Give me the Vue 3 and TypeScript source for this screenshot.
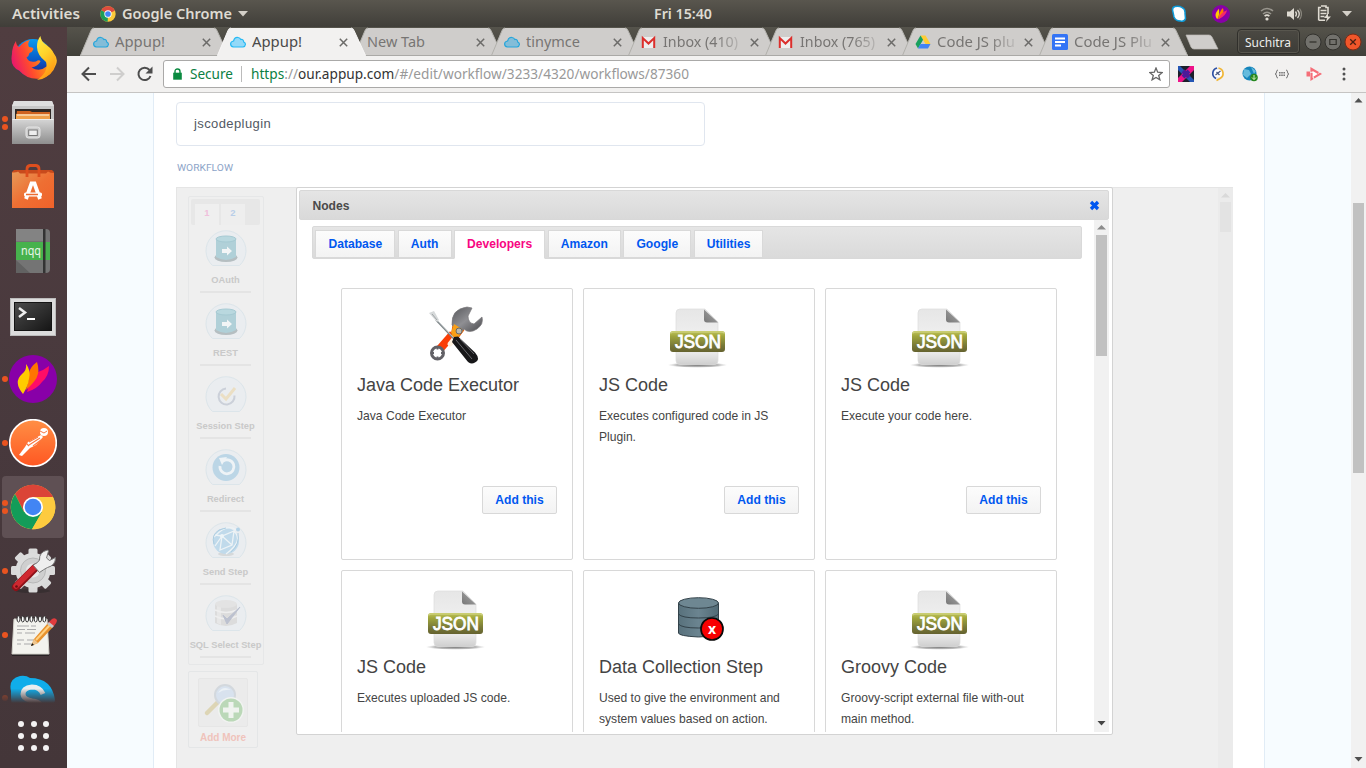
<script setup lang="ts">
import { h } from 'vue'
import type { FunctionalComponent } from 'vue'

interface LabelProps {
  text: string
  w: number
  size?: number
  color?: string
  weight?: number
  family?: string
}

// One line of text set to an exact advance width.
const Label: FunctionalComponent<LabelProps> = (p) =>
  h('svg', { width: p.w, height: 20, style: 'display:block;flex:none;overflow:visible' }, [
    h(
      'text',
      {
        x: 0,
        y: 15,
        textLength: p.w,
        lengthAdjust: 'spacingAndGlyphs',
        'font-size': p.size ?? 14,
        'font-weight': p.weight ?? 400,
        'font-family': p.family ?? '"Noto Sans", "Open Sans", sans-serif',
        fill: p.color ?? '#333',
      },
      p.text,
    ),
  ])
Label.props = ['text', 'w', 'size', 'color', 'weight', 'family']

interface Tab {
  title: string
  w: number
  icon: string
  active?: boolean
  fade?: boolean
}
const tabs: Tab[] = [
  { title: 'Appup!', w: 50, icon: 'cloud' },
  { title: 'Appup!', w: 50, icon: 'cloud', active: true },
  { title: 'New Tab', w: 58, icon: '' },
  { title: 'tinymce', w: 54, icon: 'cloud' },
  { title: 'Inbox (410)', w: 75, icon: 'mail', fade: true },
  { title: 'Inbox (765)', w: 75, icon: 'mail', fade: true },
  { title: 'Code JS plu', w: 78, icon: 'drive', fade: true },
  { title: 'Code JS Plu', w: 78, icon: 'docs', fade: true },
]

const dock = [
  { id: 'firefox', dots: 0 },
  { id: 'files', dots: 2 },
  { id: 'software', dots: 0 },
  { id: 'nqq', dots: 0 },
  { id: 'terminal', dots: 0 },
  { id: 'flame', dots: 1 },
  { id: 'postman', dots: 1 },
  { id: 'chrome', dots: 2 },
  { id: 'settings', dots: 1 },
  { id: 'notes', dots: 1 },
  { id: 'skype', dots: 1 },
]

const steps = [
  { name: 'OAuth', icon: 'bucket' },
  { name: 'REST', icon: 'bucket' },
  { name: 'Session Step', icon: 'check' },
  { name: 'Redirect', icon: 'redo' },
  { name: 'Send Step', icon: 'globe' },
  { name: 'SQL Select Step', icon: 'sql' },
]

const categories = ['Database', 'Auth', 'Developers', 'Amazon', 'Google', 'Utilities']

const cards = [
  { title: 'Java Code Executor', text: 'Java Code Executor', icon: 'tools' },
  { title: 'JS Code', text: 'Executes configured code in JS Plugin.', icon: 'json' },
  { title: 'JS Code', text: 'Execute your code here.', icon: 'json' },
  { title: 'JS Code', text: 'Executes uploaded JS code.', icon: 'json' },
  { title: 'Data Collection Step', text: 'Used to give the environment and system values based on action.', icon: 'data' },
  { title: 'Groovy Code', text: 'Groovy-script external file with-out main method.', icon: 'json' },
]

const gearTeeth = [0, 45, 90, 135, 180, 225, 270, 315]
const rings = [0, 1, 2, 3, 4, 5, 6]
const gridDots = [0, 1, 2, 3, 4, 5, 6, 7, 8]
</script>

<template>
  <div class="desktop">
    <svg class="defs" width="0" height="0">
      <defs>
        <linearGradient id="ffBody" x1="0" y1="0.6" x2="1" y2="0.3">
          <stop offset="0" stop-color="#e8156f" /><stop offset=".35" stop-color="#ff4a2e" /><stop offset=".7" stop-color="#ff9416" /><stop offset="1" stop-color="#ffc52a" />
        </linearGradient>
        <linearGradient id="ffTail" x1="0" y1="0" x2="0.4" y2="1">
          <stop offset="0" stop-color="#fff04a" /><stop offset=".5" stop-color="#ffd22a" /><stop offset="1" stop-color="#ff9a14" />
        </linearGradient>
        <linearGradient id="ffGlobe" x1="0" y1="0" x2="0" y2="1">
          <stop offset="0" stop-color="#0a9bf0" /><stop offset=".6" stop-color="#0a54c4" /><stop offset="1" stop-color="#2b1b78" />
        </linearGradient>
        <linearGradient id="metal" x1="0" y1="0" x2="0" y2="1">
          <stop offset="0" stop-color="#d6d6d6" /><stop offset="1" stop-color="#8e8e8e" />
        </linearGradient>
        <linearGradient id="bag" x1="0" y1="0" x2="1" y2="1">
          <stop offset="0" stop-color="#e89a58" /><stop offset=".5" stop-color="#ee6f33" /><stop offset="1" stop-color="#f0622a" />
        </linearGradient>
        <linearGradient id="screen" x1="0" y1="0" x2="1" y2="1">
          <stop offset="0" stop-color="#4b4b4b" /><stop offset="1" stop-color="#161616" />
        </linearGradient>
        <linearGradient id="pm" x1="0" y1="0" x2="0" y2="1">
          <stop offset="0" stop-color="#ff8f45" /><stop offset="1" stop-color="#ff5722" />
        </linearGradient>
        <linearGradient id="paper" x1="0" y1="0" x2="0" y2="1">
          <stop offset="0" stop-color="#e6e6e6" /><stop offset=".5" stop-color="#efefef" /><stop offset=".8" stop-color="#e8e8e8" /><stop offset="1" stop-color="#cfcfcf" />
        </linearGradient>
        <linearGradient id="olive" x1="0" y1="0" x2="0" y2="1">
          <stop offset="0" stop-color="#c0c45a" /><stop offset=".25" stop-color="#9fa53c" /><stop offset=".7" stop-color="#777838" /><stop offset="1" stop-color="#65622f" />
        </linearGradient>
        <linearGradient id="fold" x1="0" y1="1" x2="1" y2="0">
          <stop offset="0" stop-color="#777" /><stop offset="1" stop-color="#aaa" />
        </linearGradient>
        <radialGradient id="shade"><stop offset="0" stop-color="#777" /><stop offset=".7" stop-color="#aaa" stop-opacity=".8" /><stop offset="1" stop-color="#ccc" stop-opacity="0" /></radialGradient>
        <linearGradient id="steel" x1="0" y1="0" x2="1" y2="1">
          <stop offset="0" stop-color="#55565a" /><stop offset=".5" stop-color="#8f8f93" /><stop offset="1" stop-color="#4a4a4e" />
        </linearGradient>
        <linearGradient id="cyl" x1="0" y1="0" x2="1" y2="0">
          <stop offset="0" stop-color="#58717c" /><stop offset=".5" stop-color="#6b8490" /><stop offset="1" stop-color="#516a75" />
        </linearGradient>
      </defs>
    </svg>

    <header class="topbar">
      <Label class="activities" text="Activities" :w="68" :size="14" :weight="600" color="#dfdbd2" />
      <svg class="mini-chrome" width="16" height="16" viewBox="0 0 48 48">
        <circle cx="24" cy="24" r="23" fill="#fbc93a" />
        <path d="M24 24 4 12.500A23 23 0 0 1 44 12.500L44 14z" fill="#dd4b3e" />
        <path d="M24 24 4 12.500A23 23 0 0 0 23 47z" fill="#1d9d58" />
        <circle cx="24" cy="24" r="11" fill="#fff" /><circle cx="24" cy="24" r="8.500" fill="#4285f4" />
      </svg>
      <Label text="Google Chrome" :w="110" :size="14" :weight="600" color="#dfdbd2" />
      <svg class="caret" width="10" height="6" viewBox="0 0 10 6"><path d="M0 0h10L5 5.500z" fill="#d4d0c8" /></svg>
      <Label class="clock" text="Fri 15:40" :w="58" :size="14" :weight="600" color="#dfdbd2" />
      <div class="tray">
        <svg width="16" height="18" viewBox="0 0 16 18"><path d="M4 1.500Q8 .5 11 2.500q3.500 1.500 3 6l.5 5q-1 3.500-5 2.500-5 0-6.500-4L1.500 5q0-3 2.500-3.500" fill="#fff" stroke="#0e9ad8" stroke-width="1.500" /></svg>
        <svg width="18" height="18" viewBox="0 0 48 48"><circle cx="24" cy="24" r="24" fill="#8800a8" /><path d="M14 38C4 25 13 18 18 10q4 14-4 28" fill="#fc0" /><path d="M16 38q4-22 13-30 5 11-4 22z" fill="#ff7a00" /><path d="M18 38Q21 20 40 14q-3 15-22 24" fill="#f8286a" /></svg>
        <svg width="14" height="14" viewBox="0 0 14 14" fill="none" stroke-width="1.600"><path d="M1 4q6-5 12 0M3 7q4-3.500 8 0" stroke="#99968e" /><path d="M4.600 9.200q2.400-2 4.800 0" stroke="#dfdbd2" /><circle cx="7" cy="12" r="1.600" fill="#dfdbd2" /></svg>
        <svg width="15" height="14" viewBox="0 0 15 14"><path d="M0 4.500h3L7 1v12L3 9.500H0z" fill="#dfdbd2" /><path d="M8.500 4.500q2 2.500 0 5M10.500 3q3.500 4 0 8" fill="none" stroke="#dfdbd2" stroke-width="1.300" /><path d="M12.500 1.500q4 5.500 0 11" fill="none" stroke="#88857c" stroke-width="1.200" /></svg>
        <svg width="15" height="17" viewBox="0 0 15 17"><path d="M4 1h5v1.500h2V9M1.700 15.500V2.500H4M2 15.300h6" fill="none" stroke="#dfdbd2" stroke-width="1.600" /><path d="M3.500 5.500h6M3.500 8.500h6M3.500 11.500h4" stroke="#dfdbd2" stroke-width="1.400" /><path d="m11 8-4 5h3l-1 4 5-5.500h-3z" fill="#dfdbd2" /></svg>
        <svg width="10" height="6" viewBox="0 0 10 6"><path d="M0 0h10L5 5.500z" fill="#d4d0c8" /></svg>
      </div>
    </header>

    <aside class="dock">
      <div v-for="d in dock" :key="d.id" class="dock-item" :class="d.id">
        <div class="dots"><i v-for="n in d.dots" :key="n" /></div>
        <svg class="dock-icon" width="48" height="48" viewBox="0 0 48 48">
          <g v-if="d.id === 'firefox'">
            <circle cx="24" cy="23" r="19" fill="url(#ffGlobe)" />
            <path d="M7 6q0 4 3 6 5-6 11-7-3 3-1 7 4 0 4.500 2-1 3-4 4-.5 3-3 4.500 2 4 5 4 4 1 6-1 2-1 3 1-3 5-9 6 8 5 15-1 6-6 2-16 11 5 7.500 14-4 12-15 14-13 2-22-8Q.5 31 3 19q0-7 4-13" fill="url(#ffBody)" />
            <path d="M31.500 1q0 5 6 9 7 5 8.500 12 1 14-9 20-4 3-9 3 12-8 9-18-9-7-9-15 0-7 3.500-11" fill="url(#ffTail)" />
          </g>
          <g v-else-if="d.id === 'files'">
            <path d="m5 2h38l2 5v36H3V7z" fill="#c7c7c7" /><path d="M5 2h38l2 5H3z" fill="#dedede" />
            <path d="M6 10h36v10H6z" fill="#2f2825" /><path d="M8 12h13l2 1h18v7H7z" fill="#cf6220" /><path d="M7 15h34v5H7z" fill="#f0a04b" /><path d="M8 16h32" stroke="#fff5e8" />
            <path d="M3 20h42v25H3z" fill="url(#metal)" /><path d="M3.500 20.500h41" stroke="#ededed" />
            <rect x="17" y="28" width="14" height="11" rx="2.500" fill="#ccc" stroke="#e6e6e6" /><rect x="19.700" y="31" width="8.600" height="5.500" fill="#eee" stroke="#777" />
          </g>
          <g v-else-if="d.id === 'software'">
            <path d="M3 9 5 7h38l2 2v6H3z" fill="#c84a1c" /><path d="M3 9.500q5 0 6-1l2 2h26l2-2q2 1.500 6 1.500v35H3z" fill="url(#bag)" />
            <path d="M18 14V6q0-3 3-3.500h6q3 .5 3 3.500v8" fill="none" stroke="#dd4e1e" stroke-width="2.800" />
            <path d="m17 36 5.500-15.500h3L31 36" fill="none" stroke="#fff" stroke-width="3.800" /><rect x="15" y="29.500" width="18" height="4" rx="1.500" fill="#fff" /><path d="M17 31.500h12" stroke="#ec6b31" stroke-width="1.500" />
          </g>
          <g v-else-if="d.id === 'nqq'">
            <path d="M7 2h30q4 0 4 4v36q0 4-4 4H7z" fill="#747474" /><path d="M7 2h27v12H7z" fill="#838383" /><path d="m7 33 14 13H7z" fill="#626262" /><path d="M7 15h34v18H7z" fill="#47b24d" /><path d="M34 2h2.500v44H34z" fill="#333" />
            <text x="12" y="27.500" font-size="12" textLength="20" lengthAdjust="spacingAndGlyphs" fill="#e9f5e9" font-family="Noto Sans">nqq</text>
          </g>
          <g v-else-if="d.id === 'terminal'">
            <path d="M1 7h46v38H1z" fill="#bcbcbc" /><path d="M2 8h44v36H2z" fill="#dcdcdc" /><path d="M5 11h38v29H5z" fill="#141414" /><path d="M6 12h36v27H6z" fill="url(#screen)" />
            <path d="m10 17 6 4.500-6 4.500" fill="none" stroke="#eee" stroke-width="2.500" /><path d="M18 28h8" stroke="#fff" stroke-width="2" />
          </g>
          <g v-else-if="d.id === 'flame'">
            <circle cx="24" cy="24" r="24" fill="#8800a8" />
            <path d="M18 37q10-3 15-10 7-6 7-16-5 4-11 6-7 3-11 20" fill="#ff0d66" /><path d="M17 35Q20 26 20 18q1-6 8-11 3 9-.5 16-3 5-10.500 12" fill="#ff7400" /><path d="M14 39q-10-12-1-20 5-4 4-10 5 6 3 15-1 7-6 15" fill="#fc0" />
          </g>
          <g v-else-if="d.id === 'postman'">
            <circle cx="24" cy="24" r="23.300" fill="url(#pm)" stroke="#fff" stroke-width="1.700" />
            <circle cx="35" cy="13" r="4" fill="#fff" /><path d="m32 16-13 7-3 5-6 8 3 1 8-8 6-3 7-8z" fill="#fff" /><path d="m31 19-11 7m9-8-9 5m12-2-8 6m-7-3 3 3" stroke="#f97842" stroke-width="1.100" /><path d="m31 12 4 2 3-2" fill="none" stroke="#f97842" />
          </g>
          <g v-else-if="d.id === 'chrome'">
            <circle cx="24" cy="24" r="22.300" fill="#fdcb3f" />
            <path d="M24 14h20A22.300 22.300 0 0 0 6 11l9 18z" fill="#db4437" />
            <path d="M6 11a22.300 22.300 0 0 0 17 35.300L33 29 15 29z" fill="#139c59" />
            <path d="M24 14h20a22.300 22.300 0 0 1-21 32.300L33 29z" fill="#fdcb3f" />
            <circle cx="24" cy="24" r="10" fill="#fff" /><circle cx="24" cy="24" r="8.300" fill="#4285f4" />
          </g>
          <g v-else-if="d.id === 'settings'">
            <ellipse cx="24" cy="44" rx="17" ry="2" fill="#222" opacity=".4" />
            <rect v-for="a in gearTeeth" :key="a" x="19.500" y="1.500" width="9" height="12" rx="1.500" fill="#dadada" :transform="`rotate(${a} 24 23.500)`" />
            <circle cx="24" cy="23.500" r="17.500" fill="#dcdcdc" /><circle cx="24" cy="23.500" r="12.500" fill="#cfcfcf" stroke="#b8b8b8" /><circle cx="24" cy="23.500" r="7" fill="#e8e8e8" />
            <path d="m7 40 19-19" stroke="#8e1118" stroke-width="8" stroke-linecap="round" /><path d="m7 39 19-19" stroke="#cf2830" stroke-width="5.500" stroke-linecap="round" />
            <path d="M24 18q5-2 6.500-5-.5-8 8-10l1 1-2 7 3 2.500 6-3q0 8-8 10-4 2-8 5z" fill="#eee" stroke="#777" /><circle cx="7.500" cy="39.500" r="1.300" fill="#691010" />
          </g>
          <g v-else-if="d.id === 'notes'">
            <path d="M3 43h37v2H3z" fill="#282224" /><path d="M5 8h33l2 35H3z" fill="#f3f3ee" stroke="#d4d4cc" />
            <g v-for="n in rings" :key="n"><ellipse :cx="9.500 + n * 4.300" cy="8" rx="1.500" ry="3" fill="#fff" stroke="#333" stroke-width="1" /></g>
            <path d="M8 15h12m2 0h5M8 18.500h8m2 0h9M8 22h5m3 0h10M8 29h7m3 0h8M8 33h4m3 0h7" stroke="#aaa" stroke-width="1.200" />
            <path d="m25 28 14-16 5 4-15 16-7 3z" fill="#e8922d" /><path d="m27 29 14-15" stroke="#ffd081" stroke-width="2" /><path d="m39 12 4-4q3-2 5 1 0 3-4 7z" fill="#e03b3d" /><path d="m38 13 5 4 2-2-5-4z" fill="#c7c7c7" /><path d="m25 28 4 4-7 3z" fill="#edc58e" /><path d="m23 32 2 2-3 1z" fill="#111" />
          </g>
          <g v-else>
            <path d="M2 16q-3-12 9-15 6-1 10 2 22 0 25 22l-5 21-24 2Q1 42 2 16" fill="#10adea" />
            <path d="M34 19q-3-7-11-7-9 1-9 7 0 5 9 7 9 1 9 7 0 5-8 5-7 0-10-7" fill="none" stroke="#e9eef0" stroke-width="5" />
          </g>
        </svg>
      </div>
      <div class="apps"><i v-for="n in gridDots" :key="n" /></div>
    </aside>

    <main class="browser">
      <div class="tabstrip">
        <div v-for="(t, i) in tabs" :key="i" class="tab" :class="{ active: t.active }">
          <svg class="shape" width="150" height="29" viewBox="0 0 150 29">
            <path d="M0 29 11 3.500Q12 1 14 1H134Q136 1 137 3.500L149 29z" :fill="t.active ? '#f2f1f0' : '#cfcdcb'" />
            <path d="M.5 28.500 11 3.500Q12 1 14 1M134 1q2 0 3 2.500l11.500 25" fill="none" :stroke="t.active ? '#f7f6f5' : '#b1b0ab'" />
            <path v-if="!t.active" d="M0 28.500h149" stroke="#aaa9a6" />
          </svg>
          <svg v-if="t.icon" class="favicon" width="16" height="16" viewBox="0 0 16 16">
            <path v-if="t.icon === 'cloud'" d="M3.500 13Q.6 12.500.6 10q0-2.500 3-3Q4.500 3 8 3.500q2 .3 2.800 2Q13.500 5 13.700 8q1.800.6 1.700 2.500-.2 2.200-2.400 2.500z" :fill="t.active ? '#93d9f8' : '#83bdd8'" :stroke="t.active ? '#26b9f3' : '#27a6db'" stroke-width="1.200" />
            <g v-else-if="t.icon === 'mail'"><path d="M1 3h13v11H1z" fill="#eee" /><path d="M1.800 14V4l5.700 5.500L13.200 4v10" fill="none" stroke="#dc2f2c" stroke-width="2" /></g>
            <g v-else-if="t.icon === 'drive'"><path d="M5.500 1.500h5L15.500 10h-5z" fill="#fc3" /><path d="m5.500 1.500 2.600 4.300L3 14.500.5 10z" fill="#19a05e" /><path d="M5.500 10h10L13 14.500H3z" fill="#4283f4" /></g>
            <g v-else><rect x="0" y="0" width="16" height="16" rx="1.500" fill="#3474f5" /><path d="M3 4.500h10M3 8h10M3 11.500h6" stroke="#fff" stroke-width="1.800" /></g>
          </svg>
          <div class="tab-title" :class="{ fade: t.fade }"><Label :text="t.title" :w="t.w" :size="14" :color="t.active ? '#4a4a4a' : '#777573'" /></div>
          <svg class="close" width="9" height="9" viewBox="0 0 9 9"><path d="m.8.8 7.400 7.400M8.200.8.800 8.200" stroke="#6c6b69" stroke-width="1.500" /></svg>
        </div>
        <svg class="newtab" width="34" height="16" viewBox="0 0 34 16"><path d="M1 1h23q2 0 3 2l6 12H9q-2 0-3-2z" fill="#cfcdcb" stroke="#bbb9b5" stroke-width=".7" /></svg>
        <div class="user"><Label text="Suchitra" :w="46" :size="12.500" color="#eeeeec" /></div>
        <div class="winbtns">
          <svg width="18" height="18" viewBox="0 0 18 18"><circle cx="9" cy="9" r="8" fill="#72716c" stroke="#33322e" /><path d="M5.500 9h7" stroke="#33322d" stroke-width="1.300" /></svg>
          <svg width="18" height="18" viewBox="0 0 18 18"><circle cx="9" cy="9" r="8" fill="#72716c" stroke="#33322e" /><path d="M5.800 6.500h6.400v5H5.800z" fill="none" stroke="#33322d" stroke-width="1.200" /></svg>
          <svg width="18" height="18" viewBox="0 0 18 18"><circle cx="9" cy="9" r="8" fill="#f0562a" stroke="#7a2b17" /><path d="m6.200 6.200 5.600 5.600m0-5.600-5.600 5.600" stroke="#4a2013" stroke-width="1.300" /></svg>
        </div>
      </div>

      <div class="toolbar">
        <svg class="nav" width="88" height="18" viewBox="0 0 88 18" fill="none" stroke-width="2">
          <path d="M16 9H3.500M9 2.500 2.500 9 9 15.500" stroke="#4d4d4d" /><path d="M30 9h12.500M37 2.500 43.500 9 37 15.500" stroke="#cfcecd" />
          <path d="M69.500 5A6.200 6.200 0 1 0 70.500 11" stroke="#4d4d4d" /><path d="M72.500 1.500V8.500H65.500z" fill="#4d4d4d" />
        </svg>
        <div class="address">
          <svg class="lock" width="9" height="12" viewBox="0 0 9 12"><path d="M2 6V3.500Q2 1 4.500 1T7 3.500V6" fill="none" stroke="#0a8a40" stroke-width="1.400" /><path d="M.2 4.700h8.600v7H.2z" fill="#0a8a40" /></svg>
          <Label class="secure" text="Secure" :w="43" :size="14" color="#0b8043" />
          <i class="divider" />
          <svg class="url" width="440" height="20"><text x="0" y="15" textLength="438" lengthAdjust="spacingAndGlyphs"><tspan class="https">https</tspan><tspan>://</tspan><tspan class="host">our.appup.com</tspan><tspan>/#/edit/workflow/3233/4320/workflows/87360</tspan></text></svg>
          <svg class="star" width="14" height="14" viewBox="0 0 14 14"><path d="m7 1 1.700 4.200 4.500.3-3.500 2.900 1.200 4.400L7 10.400l-3.900 2.400 1.200-4.400L.8 5.500l4.500-.3z" fill="none" stroke="#666" stroke-width="1.300" /></svg>
        </div>
        <div class="exts">
          <svg width="16" height="16" viewBox="0 0 16 16"><path d="M0 0h16v16H0z" fill="#1c1f2b" /><path d="m2 0 14 14v2h-4L0 4V0z" fill="#2456b4" /><path d="M16 0v4L4 16H0v-4L12 0z" fill="#ee1289" /><path d="m5 5 6 6m0-6-6 6" stroke="#4b1b99" stroke-width="4" /></svg>
          <svg width="16" height="16" viewBox="0 0 16 16" fill="none"><circle cx="8" cy="7.500" r="4.600" fill="#fff" stroke="#ddd" /><path d="M7 2a5.600 5.600 0 0 0-1 10.500" stroke="#2b4fa5" stroke-width="1.600" /><path d="M8.500 2a5.600 5.600 0 0 1 1.500 10.500L6.500 14.500" stroke="#f2b632" stroke-width="1.600" /><path d="m5.500 9 5-4M6.500 6l3 3" stroke="#475680" stroke-width="1.200" /></svg>
          <svg width="16" height="16" viewBox="0 0 16 16"><circle cx="7.500" cy="7.500" r="7" fill="#1685bb" /><path d="m2 3 5 1 2 4-4 4-4-3zM9 1l5 4-2 3z" fill="#65bbdd" /><circle cx="12" cy="11.500" r="3.800" fill="#27881f" /><path d="M12 9v4.500m-2-2 2 2 2-2" stroke="#d3f3bd" fill="none" /></svg>
          <svg width="16" height="16" viewBox="0 0 16 16" fill="none" stroke="#777" stroke-width="1"><path d="M4 4Q2.500 4 2.500 6T1 8q1.500 0 1.500 2T4 12M12 4q1.500 0 1.500 2T15 8q-1.500 0-1.500 2T12 12" /><path d="M5 6.700h6M5 9.300h6" stroke-width="1.400" stroke-dasharray="1.600 .6" /></svg>
          <svg width="16" height="16" viewBox="0 0 16 16"><path d="M.5 5.500H4v5H.5z" fill="#f56e78" /><path d="M5.500 3 14 8 5.500 13z" fill="#fff" stroke="#f56e78" stroke-width="2.200" stroke-dasharray="8 1" /></svg>
          <svg class="menu" width="4" height="16" viewBox="0 0 4 16" fill="#505050"><circle cx="2" cy="3" r="1.500" /><circle cx="2" cy="8" r="1.500" /><circle cx="2" cy="13" r="1.500" /></svg>
        </div>
      </div>

      <div class="page">
        <section class="sheet">
          <div class="field">jscodeplugin</div>
          <div class="caption"><Label text="WORKFLOW" :w="56" :size="9" color="#8da4c8" family="Roboto, sans-serif" /></div>
          <div class="frame">
            <div class="side">
              <div class="palette">
                <div class="palette-tabs"><span class="on">1</span><span>2</span></div>
                <div v-for="s in steps" :key="s.name" class="step">
                  <svg width="42" height="37" viewBox="0 0 42 37">
                    <path d="M7.500 35.500A20 20 0 1 1 34.500 35.500z" fill="#eaedf0" stroke="#dce5ea" />
                    <g v-if="s.icon === 'bucket'"><ellipse cx="21" cy="27.500" rx="11.500" ry="4.500" fill="#b5bec1" /><path d="M11 9v18q10 6 20 0V9z" fill="#b0d0d8" /><ellipse cx="21" cy="9" rx="10" ry="3" fill="#b9d8df" stroke="#a6cad3" /><path d="M17 19h5v-2.500l5 4.500-5 4.500V23h-5z" fill="#f2f5f6" /></g>
                    <g v-else-if="s.icon === 'check'" fill="none"><path d="M21 12.500a8 8 0 1 0 8.500 7" stroke="#cbd0d9" stroke-width="2" /><path d="m16 18 5 5 9-11" stroke="#ebdfc4" stroke-width="3" /></g>
                    <g v-else-if="s.icon === 'redo'"><circle cx="21" cy="18.500" r="13.500" fill="#bcd6e6" /><path d="M15 17a7 7 0 1 0 3-5" fill="none" stroke="#eef3f6" stroke-width="2.800" /><path d="m14 9 8-1-5 8z" fill="#eef3f6" /></g>
                    <g v-else-if="s.icon === 'globe'"><ellipse cx="21" cy="32" rx="8" ry="2" fill="#d6d9da" /><circle cx="21" cy="19" r="13" fill="#c0daeb" /><path d="m10 13 7 1 12-5-2 14-12 5 2-14-7 10m7-10 10 9M9 15q13-14 22-7M29 9q10 10-8 23" fill="none" stroke="#edf3f6" stroke-width="1.300" /><path d="M9 22q-3-9 5-14l7-2M26 30q9-8 7-19" fill="none" stroke="#adcde1" /><circle cx="33" cy="7.500" r="2" fill="#b3d2e7" /><circle cx="17" cy="14" r="2" fill="#edf5f8" /></g>
                    <g v-else><path d="M10 9v19q11 6 22 0V9z" fill="#dcdcdc" /><path d="M12 10v18l4 2V10z" fill="#e7e7e7" /><ellipse cx="21" cy="9" rx="11" ry="4" fill="#e3e3e3" /><path d="M10 15q11 5 22 0M10 21q11 6 22 0" fill="none" stroke="#eee" stroke-width="1.500" /><path d="m18 20 4 4L35 12 22 29z" fill="#bcc1cf" stroke="#bcc1cf" /></g>
                  </svg>
                  <b>{{ s.name }}</b>
                  <i />
                </div>
              </div>
              <div class="more">
                <div class="more-icon">
                  <svg width="48" height="47" viewBox="0 0 48 47"><path d="m8 34 10-10" stroke="#ddd5b5" stroke-width="4.500" stroke-linecap="round" /><circle cx="26" cy="16" r="10" fill="#d8e2ee" stroke="#d3d8dd" stroke-width="2" /><path d="M19 14q5-8 13-3-7-1-13 3" fill="#ebf1f6" /><circle cx="32" cy="31" r="13" fill="#f1f3f1" /><circle cx="32" cy="31" r="11.500" fill="#bbd8b8" /><path d="M32 23v16m-8-8h16" stroke="#f0f3ef" stroke-width="5" /></svg>
                </div>
                <b>Add More</b>
              </div>
            </div>

            <div class="dialog">
              <div class="titlebar"><b>Nodes</b><svg width="11" height="11" viewBox="0 0 11 11"><path d="m2 2 7 7m0-7-7 7" stroke="#0057f0" stroke-width="3.300" /></svg></div>
              <div class="body">
                <div class="scrolled">
                  <div class="cats"><span v-for="c in categories" :key="c" :class="{ on: c === 'Developers' }">{{ c }}</span></div>
                  <div class="cards">
                    <article v-for="(c, i) in cards" :key="i" class="card">
                      <svg class="art" width="64" height="64" viewBox="0 0 64 64">
                        <g v-if="c.icon === 'json'">
                          <ellipse cx="31.500" cy="61" rx="30" ry="2.800" fill="url(#shade)" />
                          <path d="M14 5h25l13 13v38q0 4.500-4 4.500H14q-4 0-4-4V9q0-4 4-4" fill="url(#paper)" stroke="#dcdcdc" stroke-width=".7" />
                          <path d="M38 5.500 52 18.500H41q-3 0-3-3z" fill="url(#fold)" />
                          <rect x="4" y="27" width="55" height="21" rx="3" fill="url(#olive)" /><path d="M5 29.500q0-1.500 2-1.500h49q2 0 2 1.500" fill="none" stroke="#d4d88c" />
                          <text x="9" y="43.800" font-family="Liberation Sans, Arial, sans-serif" font-size="17.500" textLength="46" lengthAdjust="spacingAndGlyphs" fill="#fff" stroke="#fff" stroke-width=".8">JSON</text>
                        </g>
                        <g v-else-if="c.icon === 'tools'">
                          <path d="m29 30-14 16" stroke="#fa3d05" stroke-width="8" /><path d="m30 35-4 5" stroke="#fff1df" stroke-width="5" stroke-linecap="round" />
                          <circle cx="13.500" cy="49" r="6" fill="#fff" stroke="#626166" stroke-width="3" /><path d="M13.500 42.500v3m0 7v3m-6.500-6.500h3m7 0h3" stroke="#626166" stroke-width="1.800" />
                          <path d="m27 33 2-12 11 5-6 8z" fill="#f89a12" stroke="#e15a08" /><path d="M28 21Q27 5 43 3l5 1-4 8q0 7 6 8l8-7q2 7-5 12-8 5-13 0-2 3-6 2z" fill="url(#steel)" stroke="#78777a" stroke-width=".7" />
                          <path d="m30 20 8 5-4 8-7-4z" fill="#f8a018" /><circle cx="35" cy="27" r="3" fill="#bcb9ae" stroke="#696969" />
                          <path d="m12 16 19 20" stroke="#7d8588" stroke-width="1.800" /><path d="m12 15 19 20" stroke="#ced3d4" stroke-width=".8" /><path d="m5 9 5-2 5 9-2 2z" fill="#d6d9da" /><path d="m8 10 5 6" stroke="#a0a5a7" />
                          <path d="m30 33 4-.5 17 16q6 7 0 10-5 3-9-3L28 38z" fill="#171719" /><path d="m32 36 16 19m-12-20 14 15" stroke="#68686c" stroke-width="1" />
                        </g>
                        <g v-else>
                          <path d="M12.500 17v30q0 3 20 4 20-1 20-4V17z" fill="url(#cyl)" stroke="#33424a" /><ellipse cx="32.500" cy="17" rx="20" ry="5.300" fill="#6e8792" stroke="#33424a" /><path d="M12.500 28q3 4 20 4t20-4M12.500 38q3 4 20 4t20-4" fill="none" stroke="#33424a" />
                          <circle cx="46" cy="43" r="11" fill="#f80000" stroke="#090909" stroke-width="1.700" /><text x="46" y="47.800" text-anchor="middle" font-size="14" font-weight="700" font-family="Noto Sans, sans-serif" fill="#fff">x</text>
                        </g>
                      </svg>
                      <h3>{{ c.title }}</h3>
                      <p>{{ c.text }}</p>
                      <button>Add this</button>
                    </article>
                  </div>
                </div>
                <div class="sbar inner">
                  <svg width="9" height="5" viewBox="0 0 9 5"><path d="M0 4.500 4.500 0 9 4.500z" fill="#8b8b8b" /></svg>
                  <i /><svg class="down" width="9" height="5" viewBox="0 0 9 5"><path d="M.5 0 4.500 4.500 8.500 0z" fill="#444" /></svg>
                </div>
              </div>
            </div>
            <div class="sbar faded"><svg width="9" height="5" viewBox="0 0 9 5"><path d="M0 4.500 4.500 0 9 4.500z" fill="#d9d9d9" /></svg><i /></div>
          </div>
        </section>
        <div class="sbar outer">
          <svg width="9" height="5" viewBox="0 0 9 5"><path d="M.5 4.500 4.500 0 8.500 4.500z" fill="#505050" /></svg>
          <i /><svg class="down" width="9" height="5" viewBox="0 0 9 5"><path d="M.5 0 4.500 4.500 8.500 0z" fill="#505050" /></svg>
        </div>
      </div>
    </main>
  </div>
</template>

<style>
html, body { margin: 0; overflow: hidden; }
</style>

<style scoped>
* { box-sizing: border-box; }
.desktop { width: 1366px; height: 768px; overflow: hidden; display: grid; grid-template: 27px 741px / 67px 1299px; font-family: "Liberation Sans", Arial, sans-serif; position: relative; }
.defs { position: absolute; }
.topbar { grid-column: 1 / 3; display: flex; align-items: flex-start; padding: 4px 15px 0 12px; background: linear-gradient(#59564e, #403e39); }
.mini-chrome { margin: 1.500px 6px 0 20px; flex: none; }
.caret { margin: 7px 0 0 6px; }
.clock { margin-left: 406px; }
.tray { margin: -4px 0 0 auto; height: 27px; width: 180px; display: flex; align-items: center; }
.tray svg { flex: none; }
.tray svg:nth-child(2) { margin-left: 25px; }
.tray svg:nth-child(3) { margin-left: 30px; }
.tray svg:nth-child(4) { margin-left: 13px; }
.tray svg:nth-child(5) { margin-left: 15px; }
.tray svg:nth-child(6) { margin-left: 10px; }

.dock { background: linear-gradient(#503d40, #48393d 55%, #443639); display: flex; flex-direction: column; }
.dock-item { height: 64px; flex: none; display: flex; align-items: center; position: relative; }
.dots { width: 9px; display: flex; flex-direction: column; align-items: center; gap: 2.500px; }
.dots i { width: 6px; height: 6px; border-radius: 50%; background: #e95420; }
.dock-icon { flex: none; }
.chrome { width: 62px; height: 62px; margin: 1px 0 1px 2px; background: #5f5054; border-radius: 4px; }
.chrome .dots { width: 7px; margin-left: -1px; }
.chrome .dock-icon { margin-left: 1px; }
.skype { height: 36px; overflow: hidden; align-items: flex-start; padding-top: 8px; mask-image: linear-gradient(#000 60%, transparent); }
.skype .dots { padding-top: 20px; opacity: .6; }
.apps { align-self: center; margin-top: 17.500px; display: grid; grid-template-columns: repeat(3, 6px); gap: 6.300px; }
.apps i { width: 6px; height: 6px; border-radius: 50%; background: #f4f2f3; }

.browser { display: grid; grid-template: 29px 37px 1fr / 1299px; }
.tabstrip { background: linear-gradient(#55534b, #403f39); display: flex; padding-left: 13px; }
.tab { position: relative; width: 149px; margin-right: -12px; flex: none; height: 29px; display: flex; align-items: flex-start; padding: 0 18.500px 0 13px; }
.tab.active { z-index: 2; }
.shape { position: absolute; left: 0; top: 0; }
.favicon { position: relative; margin: 7px 6px 0 0; flex: none; }
.tab-title { position: relative; flex: 1; height: 24px; padding-top: 5px; overflow: hidden; }
.tab-title.fade { mask-image: linear-gradient(90deg, #000 60%, transparent 97%); }
.close { position: relative; flex: none; margin: 11px 0 0 0; }
.newtab { margin: 7px 0 0 9px; flex: none; }
.user { margin: 2px 0 0 18px; width: 63px; height: 25px; flex: none; padding: 2px 0 0 7px; border: 1px solid #302f2b; border-radius: 4px; background: linear-gradient(#4b4943, #3d3c37); box-shadow: inset 0 0 0 1px #58564e; }
.winbtns { display: flex; gap: 2px; margin: 6px 0 0 4px; flex: none; }

.toolbar { background: #f2f1f0; border-bottom: 1px solid #c5c4c3; display: flex; align-items: flex-start; }
.nav { margin: 9px 0 0 13px; flex: none; }
.address { margin: 4px 0 0 -5px; width: 1007px; height: 28px; border: 1px solid #aaa9a8; border-radius: 3px; background: #fff; display: flex; align-items: flex-start; padding: 3px 6px 0 9px; flex: none; }
.lock { margin-top: 4px; }
.secure { margin-left: 8px; }
.divider { width: 1px; height: 16px; background: #bbb; margin: 2px 9px 0 8px; }
.url { font: 14px "Noto Sans", "Open Sans", sans-serif; fill: #999; overflow: visible; flex: none; }
.https { fill: #0b8043; }
.host { fill: #333; }
.star { margin: 3px 0 0 auto; }
.exts { display: flex; gap: 16px; margin: 10px 0 0 8px; }
.menu { margin-left: 4px; }

.page { background: #f7fcff; display: flex; justify-content: space-between; height: 675px; overflow: hidden; }
.sheet { margin-left: 86px; width: 1112px; background: #fff; border: solid #e1ecf6; border-width: 0 1px; padding: 9px 0 0 22px; flex: none; }
.field { width: 529px; height: 44px; border: 1px solid #e0e6ef; border-radius: 4px; padding-left: 17px; font-size: 13px; letter-spacing: .4px; line-height: 42px; color: #525964; }
.caption { height: 41px; padding: 10px 0 0 1px; }
.frame { width: 1057px; height: 581px; border: solid #e5e5e5; border-width: 1px 0 0 1px; background: #efefef; display: flex; align-items: flex-start; }
.side { padding: 8px 0 0 11px; width: 119px; flex: none; }
.palette { width: 76px; height: 469px; border: 1px solid #e6e7e8; border-radius: 2px; padding: 2px 3px 2px 2px; }
.palette-tabs { height: 26px; border-radius: 2px; background: #e7e7e7; display: flex; gap: 2px; padding: 5px 0 0 4px; }
.palette-tabs span { width: 24px; background: #eee; font: bold 9.500px/18px "Liberation Sans", sans-serif; text-align: center; color: #b9cee9; }
.palette-tabs .on { color: #f0bfdc; background: #efefef; }
.step { height: 73px; display: flex; flex-direction: column; align-items: center; padding-top: 5px; }
.step svg { flex: none; }
.step b, .more b { font-size: 9.300px; line-height: 11px; margin-top: 8px; white-space: nowrap; color: #c9c9c9; }
.step i { flex: none; width: 51px; height: 2px; background: #e4e4e4; margin-top: 5px; }
.more { width: 70px; height: 77px; margin-top: 6px; border: 1px solid #e4e6e7; border-radius: 2px; display: flex; flex-direction: column; align-items: center; padding-top: 6px; }
.more-icon { width: 50px; height: 49px; border: 1px solid #e6e6e6; background: #ebebeb; border-radius: 2px; flex: none; }
.more b { color: #f0c3bb; font-size: 10px; margin-top: 5px; }

.dialog { width: 817px; height: 548px; margin-top: -1px; border: 1px solid #d3d3d3; border-radius: 2px; background: #fff; padding: 2px; flex: none; }
.titlebar { height: 30px; border: 1px solid #d8d8d8; border-radius: 2px; background: linear-gradient(#e5e5e5, #d9d9d9); display: flex; justify-content: space-between; align-items: center; padding: 1px 8px 0 12.500px; width: 810px; }
.titlebar b { font-size: 12.100px; color: #4a4a4a; }
.body { display: flex; height: 512px; width: 810px; }
.scrolled { width: 795px; height: 512px; overflow: hidden; padding: 6px 12px 0 13px; flex: none; }
.cats { height: 33px; background: linear-gradient(#e5e5e5, #dadada); border: 1px solid #d9d9d9; border-radius: 2px; padding: 3px 0 0 2.400px; display: flex; gap: 2.420px; }
.cats span { height: 28px; border: 1px solid #d9d9d9; background: linear-gradient(#fcfcfc, #f3f3f3); padding: 0 12.100px; font: bold 12.100px/27px "Liberation Sans", sans-serif; color: #0057f0; }
.cats .on { height: 29px; background: #fff; color: #f80682; border-bottom-color: #fff; }
.cards { margin: 29px 0 0 29px; display: grid; grid-template-columns: repeat(3, 232px); grid-auto-rows: 272px; gap: 10px; }
.card { border: 1px solid #d8d8d8; border-radius: 2px; background: #fff; padding: 15px; display: flex; flex-direction: column; }
.art { flex: none; align-self: center; margin-right: 2px; }
h3 { margin: 6px 0 0; height: 22px; font: 18px/22px "Liberation Sans", Arial, sans-serif; color: #444; }
p { margin: 10px 0 0; height: 80px; font-size: 12.100px; line-height: 21px; color: #444; flex: none; }
button { align-self: flex-end; width: 75px; height: 28px; flex: none; padding: 0; border: 1px solid #d8d8d8; border-radius: 2px; background: linear-gradient(#fcfcfc, #f3f3f3); color: #0057f0; font: bold 12.100px/26px "Liberation Sans", Arial, sans-serif; }
.sbar { width: 15px; flex: none; background: #f1f1f1; display: flex; flex-direction: column; align-items: center; }
.sbar svg { margin: 5px 0; flex: none; }
.sbar i { width: 11px; background: #c1c1c1; flex: none; }
.sbar .down { margin: auto 0 6px; }
.inner i { height: 121px; }
.faded { margin-left: auto; height: 580px; background: #ebebeb; }
.faded i { height: 30px; background: #e3e3e3; margin-top: -1px; }
.outer i { height: 270px; margin-top: 95px; }
</style>
